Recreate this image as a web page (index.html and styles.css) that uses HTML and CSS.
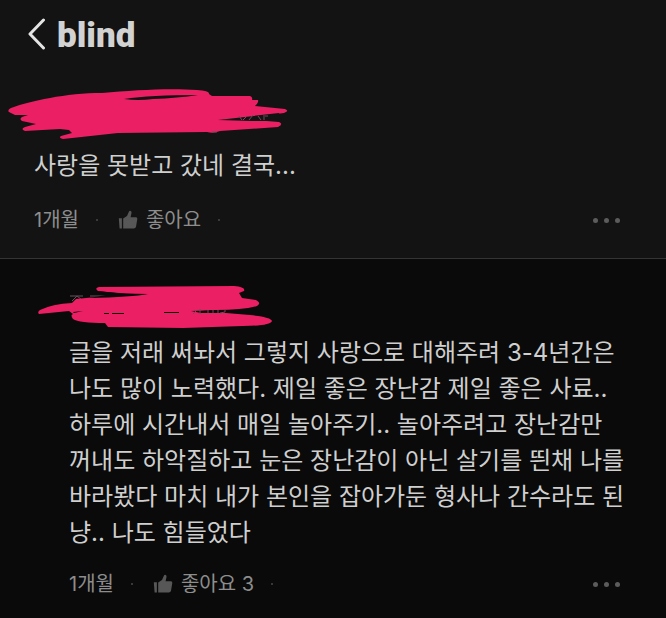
FILE: index.html
```html
<!DOCTYPE html>
<html lang="ko">
<head>
<meta charset="utf-8">
<meta name="viewport" content="width=device-width, initial-scale=1">
<title>blind</title>
<link rel="stylesheet" href="styles.css">
</head>
<body>
<svg class="sprite" aria-hidden="true">
  <symbol id="thumb" viewBox="0 0 20 20">
    <path d="M0.8 8.2h3.1v10.3H1.6z"/>
    <path d="M5.2 8.5 9 6 11 1.6Q11.6.4 12.7 1q1.1.6.8 2.1L12.6 7.200h5.400q1.500.100 1.300 1.700l-1.300 7.800q-.400 1.800-2.200 1.800H5.200z"/>
  </symbol>
</svg>
<header class="topbar">
  <button class="back" type="button" aria-label="뒤로">
    <svg viewBox="0 0 18 34" width="18" height="34" aria-hidden="true"><path d="M15.500 3 2 17l13.500 14"/></svg>
  </button>
  <span class="logo">blind</span>
</header>
<main>
  <article class="comment">
    <svg class="scribble" viewBox="0 0 280 52" width="280" height="52" aria-hidden="true">
      <path class="ink" d="M1 24Q-1 22 3 20C22 13 58 5 94 5C126 2 162 0 189 2Q202 3 201 6L204 8L242 8Q245 9 244 12L250 12Q251 14 247 18L277 21Q282 23 276 25L232 31L271 34Q276 36 270 39L212 43Q205 46 199 44L110 45L55 51Q50 50 53 48L64 45L61 42L52 41L17 43Q12 41 17 39L28 36L14 33Q11 31 14 29L20 27L7 27Z"/>
      <path class="gap" d="M116 11Q143 7 190 7Q170 10 145 11Q130 13 116 11Z"/>
      <path class="gap" d="M210 32 271 25 274 33 244 33Z"/>
      <path class="trace" d="M231 28l3 4M238 29l-3 3M245 27l-4 5M250 28l3 4M256 27v5M260 28h-3M204 44h5"/>
    </svg>
    <p class="text">사랑을 못받고 갔네 결국...</p>
    <footer class="meta">
      <time>1개월</time><i class="dot"></i>
      <button class="like" type="button"><svg width="20" height="20" aria-hidden="true"><use href="#thumb"/></svg>좋아요</button><i class="dot"></i>
      <button class="more" type="button" aria-label="더보기"><i></i><i></i><i></i></button>
    </footer>
  </article>
  <article class="comment reply">
    <svg class="scribble" viewBox="0 0 236 42" width="236" height="42" aria-hidden="true">
      <path class="trace" d="M32 11h13M39 11l-5 5M39 11l5 4M52 11h16"/>
      <path class="ink" d="M1 29Q-1 27 2 25Q14 19 34 18L38 14L58 12L88 9L60 6Q56 3 61 2L196 1Q208 2 206 6L201 8L204 13L218 15Q224 18 219 21Q205 25 178 25L164 26L212 30Q233 32 234 36Q232 41 205 41L145 43L70 42L67 38Q41 38 35 34Q32 30 35 29L31 26Z"/>
      <path class="gap" d="M58 6Q85 9 110 9Q94 12 51 13L68 10ZM35 27l10-1-9 2ZM66 28h5v1h-5ZM74 28h12v1H74ZM126 27h15v1H126ZM153 26 181 25 191 28 163 28Z"/>
      <path class="trace" d="M158 26l-3 3M162 24v5M170 25v3M175 25v3M180 25v3M187 25v2l-5 1"/>
    </svg>
    <p class="text">글을 저래 써놔서 그렇지 사랑으로 대해주려 3-4년간은 나도 많이 노력했다. 제일 좋은 장난감 제일 좋은 사료.. 하루에 시간내서 매일 놀아주기.. 놀아주려고 장난감만 꺼내도 하악질하고 눈은 장난감이 아닌 살기를 띈채 나를 바라봤다 마치 내가 본인을 잡아가둔 형사나 간수라도 된냥.. 나도 힘들었다</p>
    <footer class="meta">
      <time>1개월</time><i class="dot"></i>
      <button class="like" type="button"><svg width="20" height="20" aria-hidden="true"><use href="#thumb"/></svg>좋아요 3</button><i class="dot"></i>
      <button class="more" type="button" aria-label="더보기"><i></i><i></i><i></i></button>
    </footer>
  </article>
</main>
</body>
</html>
```
FILE: styles.css
```css
* { box-sizing: border-box; }
body {
  margin: 0;
  min-height: 100vh;
  background: #0a0a0a;
  color: #cfcfcf;
  font-family: Inter, "Noto Sans CJK KR", sans-serif;
}
button {
  padding: 0;
  border: 0;
  background: none;
  color: inherit;
  font: inherit;
}
.sprite { position: absolute; width: 0; height: 0; }
.topbar {
  display: flex;
  align-items: center;
  gap: 11px;
  height: 68px;
  padding-left: 28px;
  background: #131313;
}
.back { display: flex; }
.back path {
  fill: none;
  stroke: #e4e4e4;
  stroke-width: 3;
  stroke-linecap: round;
  stroke-linejoin: round;
}
.logo {
  padding-top: 3px;
  color: #d2d2d2;
  font: 900 35px/40px Roboto, sans-serif;
}
.comment {
  padding: 20px 46px 24px 34px;
  border-bottom: 1px solid #343434;
  background: #131313;
}
.reply {
  padding: 26px 38px 12px 69px;
  border-bottom: 0;
  background: #0a0a0a;
}
.scribble {
  display: block;
  margin-left: -26px;
  overflow: visible;
}
.reply .scribble { margin-left: -31px; }
.ink { fill: #eb1f63; }
.gap { fill: #131313; }
.reply .gap { fill: #0a0a0a; }
.trace { fill: none; stroke: #66505a; stroke-width: 1; }
.text {
  margin: 8px 0 0;
  font-size: 24px;
  line-height: 36px;
  word-break: break-all;
}
.meta {
  display: flex;
  align-items: center;
  height: 28px;
  margin-top: 22px;
  color: #8d8d8d;
  font-size: 20px;
  line-height: 28px;
}
.reply .meta { margin-top: 19px; }
.dot {
  width: 2px;
  height: 2px;
  margin: 0 20px 0 17px;
  border-radius: 50%;
  background: #484848;
}
.like {
  display: flex;
  align-items: center;
  gap: 8px;
}
.like svg { fill: #575757; }
.more {
  display: flex;
  gap: 6px;
  margin-left: auto;
}
.reply .more { margin-right: 8px; }
.more i {
  width: 5px;
  height: 5px;
  border-radius: 50%;
  background: #5c5c5c;
}
```
